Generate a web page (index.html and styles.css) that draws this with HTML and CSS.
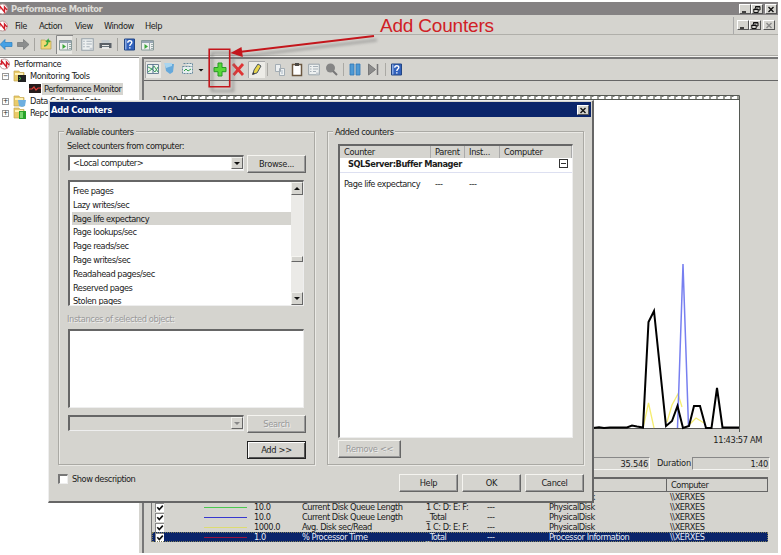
FILE: index.html
```html
<!DOCTYPE html>
<html lang="en">
<head>
<meta charset="utf-8">
<title>Performance Monitor</title>
<link rel="stylesheet" href="styles.css">
</head>
<body>
<svg class="defs" width="0" height="0">
  <defs>
    <symbol id="logo" viewBox="0 0 12 12"><circle cx="5.5" cy="6" r="5" fill="#fff" stroke="#b99"/><path d="M1 6h1.7V3l4.8 6V4l2.5 3" fill="none" stroke="#d01f2b" stroke-width="1.4"/></symbol>
    <symbol id="folder" viewBox="0 0 14 12"><path d="M1 1h5l1 1.5h4V11H1z" fill="#e9cb6a" stroke="#c5a850" stroke-width=".7"/><path d="M2 3h8v2H2z" fill="#fff2b8"/></symbol>
    <symbol id="help" viewBox="0 0 11 12"><path d="M.5.5h10v11H.5z" fill="#3262bd" stroke="#234684"/><path d="M1 1h1.5v10H1z" fill="#88a9e3"/><path d="M3.8 4.2c0-2.6 4-2.6 4-.2 0 1.5-2 1.6-2 3.5M5.8 8.7v1.2" fill="none" stroke="#fff" stroke-width="1.4"/></symbol>
    <symbol id="window" viewBox="0 0 13 12"><path d="M.5 1.500h12v9.500H.5z" fill="#eef0ef" stroke="#899"/><path d="M1 2h11v2H1z" fill="#98a5b3"/><path d="M8.500 4v7M10 5.500h2M10 7.500h2M10 9.500h2" stroke="#9aa"/><path d="M3.500 5l3.500 2.500-3.500 2.500z" fill="#38a637"/></symbol>
    <symbol id="sheet" viewBox="0 0 12 12"><path d="M.7.7h10.600v10.600H.7z" fill="#edf0f0" stroke="#98a3aa"/><path d="M2 3h1.500M5 3h5M2 5.500h1.500M5 5.500h5M2 8h1.500M5 8h3" stroke="#a6b0b8"/><path d="M8 9h3v2H8z" fill="#c4cbd0"/></symbol>
    <symbol id="min" viewBox="0 0 10 9"><path d="M2 7h4" stroke="#111" stroke-width="1.500"/></symbol>
    <symbol id="restore" viewBox="0 0 10 9"><path d="M3.500 3.500V1.500h4.500v3.500H6.500M1.800 4h4.400v3.500H1.800zM3.500 2h4.500M1.800 4.500h4.400" fill="none" stroke="#111"/></symbol>
    <symbol id="close" viewBox="0 0 10 9"><path d="M2.500 2l5 5M7.500 2l-5 5" stroke="currentColor" stroke-width="1.400"/></symbol>
    <symbol id="tick" viewBox="0 0 8 8"><path d="M1.300 3.300l2 2.300 3.500-4" fill="none" stroke="#111" stroke-width="1.600"/></symbol>
  </defs>
</svg>
<div class="window">
  <header class="titlebar"><svg class="logo"><use href="#logo"/></svg><b>Performance Monitor</b>
    <span class="winbtns"><i><svg><use href="#min"/></svg></i><i><svg><use href="#restore"/></svg></i><i class="last"><svg><use href="#close"/></svg></i></span>
  </header>
  <nav class="menubar"><svg class="logo"><use href="#logo"/></svg><span class="m1">File</span><span class="m2">Action</span><span class="m3">View</span><span class="m4">Window</span><span>Help</span>
    <span class="winbtns child"><i><svg><use href="#min"/></svg></i><i><svg><use href="#restore"/></svg></i><i class="last off"><svg><use href="#close"/></svg></i></span>
  </nav>
  <div class="maintools">
    <svg width="778" height="20" viewBox="0 0 778 20">
      <path d="M0 9.500l5-5v3h7v4H5v3z" fill="#45a1e5" stroke="#287dbd" stroke-width=".7"/>
      <path d="M29 9.500l-5.500-5v3h-6v4h6v3z" fill="#8b8d8d" stroke="#737676" stroke-width=".7"/>
      <path d="M34.500 3v13M76.500 3v13M117.500 3v13" stroke="#a5a49f"/>
      <path d="M41 5h4l1 1h5v8H41z" fill="#f1d775" stroke="#b79d52" stroke-width=".7"/><path d="M44 11c3 0 4-2 4-6l-2 2m2-2l2 2" fill="none" stroke="#3aa83b" stroke-width="1.500"/>
      <path d="M56.500 19V.5H73" fill="none" stroke="#888"/><path d="M57 1h15v18H57z" fill="#e9e8e4"/>
      <use href="#window" x="59" y="4" width="13" height="12"/>
      <use href="#sheet" x="81" y="3" width="13" height="13"/>
      <path d="M101.500 5h8v4h-8z" fill="#c4cbd0"/><path d="M99.500 8h12v5h-12z" fill="#596067"/><path d="M102 10h7v4h-7z" fill="#e8e9e9"/><path d="M102 11.500h7" stroke="#68747d"/>
      <use href="#help" x="124" y="3" width="11" height="13"/><use href="#window" x="141" y="4" width="13" height="12"/>
    </svg>
  </div>
  <main class="content">
    <aside class="tree">
      <div class="node root"><svg class="logo"><use href="#logo"/></svg><span>Performance</span></div>
      <div class="node"><i class="exp">−</i><svg class="nicon" viewBox="0 0 14 12"><use href="#folder" width="14" height="12"/><path d="M5 5h8v7H5z" fill="#222"/><path d="M6 7l2 1.500L6 10" fill="none" stroke="#4b4"/></svg><span>Monitoring Tools</span></div>
      <div class="node leaf"><svg class="picon" viewBox="0 0 12 9"><path d="M0 0h12v9H0z" fill="#251b1b"/><path d="M0 5h3l2-2 2 3 2-2h3" fill="none" stroke="#e13d36" stroke-width="1.200"/></svg><span class="chosen">Performance Monitor</span></div>
      <div class="node"><i class="exp">+</i><svg class="nicon" viewBox="0 0 14 12"><use href="#folder" width="14" height="12"/><path d="M5 5h8l-1 6-3 1-3-1z" fill="#6eafe0"/></svg><span>Data Collector Sets</span></div>
      <div class="node"><i class="exp">+</i><svg class="nicon" viewBox="0 0 14 12"><use href="#folder" width="14" height="12"/><path d="M6 4h7v8H6z" fill="#28a22c"/><path d="M7 5h3v6H7z" fill="#77d66d"/></svg><span>Repc</span></div>
    </aside>
    <section class="monitor">
      <div class="montools">
        <svg width="630" height="22" viewBox="144 57 630 22">
          <path d="M145 59h16v17h-16z" fill="#e9e9e5"/><path d="M145.500 76V59.500H161" fill="none" stroke="#aaa"/>
          <path d="M147.500 62.500h11v9h-11z" fill="#edf5ef" stroke="#6c8396"/><path d="M148 65l4 2 2-3 4 6M148 70l4-3 3 3 3-5" fill="none" stroke="#40a05f"/><path d="M153 62v9" stroke="#516e93"/>
          <path d="M165 62h9l-1 8-3 2-4-3z" fill="#66a9db"/><path d="M164 61h8v3l-6 2z" fill="#a9d5ef"/>
          <path d="M183.500 61.500h9v3M182.500 64.500h10v7h-10z" fill="#e5eeee" stroke="#68899d" stroke-dasharray="2 1"/><path d="M184 69l2-2 2 2 3-2" fill="none" stroke="#35a247"/><path d="M198.500 67h5l-2.500 2.500z" fill="#111"/>
          <path d="M218 61h4v4.500h4v4.200h-4V74h-4v-4.300h-4v-4.200h4z" fill="#58d739" stroke="#249a24"/>
          <path d="M233 62l10 11M243 62l-9.500 11" stroke="#df3434" stroke-width="2.800"/>
          <path d="M248 59h17v17h-17z" fill="#edece7"/><path d="M248.500 76V59.500H265" fill="none" stroke="#aaa"/><path d="M253 72l1-4 4-6 3 2-4 7z" fill="#e9d648" stroke="#4b5561"/><path d="M252 73l1-3 2 2z" fill="#333"/>
          <path d="M267.500 61v13M343.500 61v13M385.500 61v13" stroke="#aaa9a4"/>
          <path d="M275.500 62.500h5v7h-5zM279.500 66.500h5v7h-5z" fill="#edf0f1" stroke="#a3adb4"/><path d="M281 69h2M281 71h2" stroke="#aab8c6"/>
          <path d="M292.500 62.500h9v11h-9z" fill="#fff" stroke="#6b5740" stroke-width="1.500"/><path d="M295 61h4v3h-4z" fill="#4d4a46"/>
          <use href="#sheet" x="308" y="61" width="12" height="13"/>
          <circle cx="330.500" cy="66" r="4.500" fill="#858585"/><path d="M333 69l4 4" stroke="#777" stroke-width="2"/>
          <path d="M350 62h4v11h-4zM356 62h4v11h-4z" fill="#4e9ad5" stroke="#3076b5" stroke-width=".8"/>
          <path d="M368.500 62l7 5.500-7 5.500z" fill="#8c8c8c" stroke="#777"/><path d="M377.500 62v11" stroke="#777" stroke-width="1.500"/>
          <use href="#help" x="391" y="61" width="11" height="13"/>
        </svg>
      </div>
      <div class="graph">
        <svg width="630" height="368" viewBox="144 80 630 368">
          <path d="M181 95h559v333H181z" fill="#fff"/>
          <path d="M184 97.500h555" stroke="#999a93" stroke-width="3" stroke-dasharray="2 5"/><path d="M185.500 96.500h553" stroke="#777" stroke-dasharray="2 5"/>
          <path d="M181 95.500h558.500V432M181 99.500h558.500" fill="none" stroke="#555953"/><path d="M181.500 95v333.500h558" fill="none" stroke="#555"/><path d="M177 99.500h4" stroke="#333"/>
          <text class="axis" x="162" y="102.500">100</text>
          <path d="M643 428L648.500 403L654 428M667 422L672 405L678 394L682 407M690 424L696 418L704 423" fill="none" stroke="#f5ed70" stroke-width="1.300"/>
          <path d="M677.500 428L683 264L688.500 427" fill="none" stroke="#777ff0" stroke-width="1.500"/>
          <path d="M593 428l6-.7 5 .8 6-.6h17l5-2 5 1L643 427.500L648.500 322L654 311L666 426L672 421L677.500 406L683 428L689 426L694 406H700L706 428H711.500L717 388L722.500 427.500H739" fill="none" stroke="#000" stroke-width="2"/>
        </svg>
        <span class="time">11:43:57 AM</span>
      </div>
      <div class="stats"><span class="field avg">35.546</span><span class="durlabel">Duration</span><span class="field dur">1:40</span></div>
      <div class="legend">
        <div class="lr lhead"><span></span><span></span><span></span><span></span><span></span><span></span><span></span><span>Computer</span></div>
        <div class="lr"><i class="check"><svg><use href="#tick"/></svg></i><i class="line green"></i><span></span><span></span><span></span><span></span><span>PhysicalDisk</span><span class="host">\\XERXES</span></div>
        <div class="lr"><i class="check"><svg><use href="#tick"/></svg></i><i class="line green"></i><span>10.0</span><span>Current Disk Queue Length</span><span>1 C: D: E: F:</span><span>---</span><span>PhysicalDisk</span><span class="host">\\XERXES</span></div>
        <div class="lr"><i class="check"><svg><use href="#tick"/></svg></i><i class="line blue"></i><span>10.0</span><span>Current Disk Queue Length</span><span>_Total</span><span>---</span><span>PhysicalDisk</span><span class="host">\\XERXES</span></div>
        <div class="lr"><i class="check"><svg><use href="#tick"/></svg></i><i class="line yellow"></i><span>1000.0</span><span>Avg. Disk sec/Read</span><span>1 C: D: E: F:</span><span>---</span><span>PhysicalDisk</span><span class="host">\\XERXES</span></div>
        <div class="lr active"><i class="check"><svg><use href="#tick"/></svg></i><i class="line red"></i><span>1.0</span><span>% Processor Time</span><span>_Total</span><span>---</span><span>Processor Information</span><span class="host">\\XERXES</span></div>
      </div>
    </section>
  </main>
</div>

<div class="dialog">
  <div class="dtitle"><b>Add Counters</b><i class="dclose"><svg><use href="#close"/></svg></i></div>
  <div class="groups">
    <section class="group">
      <h2>Available counters</h2>
      <div class="label">Select counters from computer:</div>
      <div class="row"><div class="combo"><span>&lt;Local computer&gt;</span><i class="drop down"></i></div><button>Browse...</button></div>
      <div class="list">
        <ul><li class="sliver"></li><li>Free pages</li><li>Lazy writes/sec</li><li class="sel">Page life expectancy</li><li>Page lookups/sec</li><li>Page reads/sec</li><li>Page writes/sec</li><li>Readahead pages/sec</li><li>Reserved pages</li><li>Stolen pages</li></ul>
        <div class="scroll"><i class="drop up"></i><i class="thumb"></i><i class="drop down"></i></div>
      </div>
      <div class="label dim inst">Instances of selected object:</div>
      <div class="instances"></div>
      <div class="row search"><div class="combo off"><span></span><i class="drop down"></i></div><button disabled>Search</button></div>
      <button class="add">Add &gt;&gt;</button>
    </section>
    <section class="group">
      <h2>Added counters</h2>
      <div class="added">
        <div class="ar ahead"><span>Counter</span><span>Parent</span><span>Inst...</span><span>Computer</span></div>
        <div class="agroup"><b>SQLServer:Buffer Manager</b><i class="collapse"></i></div>
        <div class="ar arow"><span>Page life expectancy</span><span>---</span><span>---</span><span></span></div>
      </div>
      <button class="remove" disabled>Remove &lt;&lt;</button>
    </section>
  </div>
  <div class="dfoot"><i class="box"></i><span>Show description</span><button>Help</button><button>OK</button><button>Cancel</button></div>
</div>

<svg class="note" width="781" height="100" viewBox="0 0 781 100">
  <defs><filter id="soft" x="-10%" y="-30%" width="120%" height="170%"><feGaussianBlur stdDeviation="1.500"/></filter></defs>
  <g fill="none" stroke="#777" stroke-width="2.500" opacity=".55" filter="url(#soft)"><path d="M212 53h21v38h-21zM377 40L236 57"/></g>
  <path d="M209.200 49.200h20.500v37.500h-20.500z" fill="none" stroke="#c4161c" stroke-width="1.600"/>
  <path d="M374 36L239 52" stroke="#c4161c" stroke-width="2"/><path d="M230.500 53l11-6 1.300 10z" fill="#c4161c"/>
  <text class="notetext" x="380" y="32" textLength="114">Add Counters</text>
</svg>
</body>
</html>
```
FILE: styles.css
```css
* { box-sizing: border-box; }
body { margin: 0; width: 781px; height: 555px; overflow: hidden; position: relative; background: #fff; color: #1b1b1b; font: 9.2px/12px "DejaVu Sans Condensed", "DejaVu Sans", sans-serif; font-stretch: condensed; white-space: nowrap; letter-spacing: -.47px; }
i { font-style: normal; }
svg { display: block; flex: none; }
.defs { position: absolute; }
.window { margin-top: 2px; width: 778px; height: 551px; background: #d5d4cf; display: flex; flex-direction: column; }
.titlebar { height: 13px; flex: none; background: #858283; color: #dddcd7; display: flex; align-items: center; font-size: 9.3px; }
.logo { width: 12px; height: 12px; margin-left: -3px; flex: none; }
.titlebar b { margin-left: 2px; }
.winbtns { display: flex; margin-left: auto; padding-right: 1px; }
.winbtns i, .dclose { display: block; width: 12px; height: 10px; background: #d5d4cf; border: 1px solid; border-color: #fff #555 #555 #fff; color: #111; }
.winbtns .last { margin-left: 2px; }
.winbtns svg, .dclose svg { width: 10px; height: 9px; }
.winbtns .off { color: #888; }
.menubar { height: 18px; margin-top: 2px; flex: none; display: flex; align-items: center; border-bottom: 1px solid #b0afaa; }
.m1 { margin-left: 6px; width: 24px; }
.m2 { width: 36px; } .m3 { width: 29px; } .m4 { width: 41px; }
.child { height: 17px; padding: 3px 3px 0 3px; border-left: 1px solid #aaa; }
.maintools { height: 21px; flex: none; border-bottom: 1px solid #aaa9a4; }
.content { display: flex; flex: 1; min-height: 0; border-top: 1px solid #f3f2ef; }
.tree { width: 139px; background: #fff; border-top: 1px solid #888; }
.node { height: 12.300px; display: flex; align-items: center; padding-left: 2px; }
.node > span { padding: 0 2px; }
.root { padding-left: 2px; }
.root span { margin-left: 1px; }
.exp { width: 7px; height: 7px; border: 1px solid #999; font-size: 7px; line-height: 5px; text-align: center; }
.nicon { width: 14px; height: 12px; margin: 0 1px 0 4px; }
.leaf { padding-left: 29px; }
.picon { width: 12px; height: 9px; margin-right: 1px; }
.chosen { background: #d5d4cf; height: 12px; }
.monitor { margin-left: 3px; flex: 1; border-left: 2px solid #777; border-top: 2px solid #777; display: flex; flex-direction: column; }
.montools { height: 22px; flex: none; border-bottom: 1px solid #666; overflow: hidden; }
.graph { height: 375px; flex: none; position: relative; }
.graph svg { height: 368px; margin-top: -1px; }
.axis { font-size: 9.500px; fill: #222; letter-spacing: 0; }
.time { position: absolute; right: 16px; top: 353px; letter-spacing: -.35px; }
.stats { height: 12px; flex: none; margin-top: 1px; display: flex; justify-content: flex-end; padding-right: 8px; letter-spacing: -.25px; }
.field { border: 1px solid; border-color: #888 #f5f5f2 #f5f5f2 #888; text-align: right; height: 13px; line-height: 11px; padding-right: 1px; }
.avg { width: 100px; } .durlabel { margin: 0 3px 0 7px; width: 32px; } .dur { width: 78px; }
.legend { margin: 8px 10px 0 7px; border-top: 2px solid #666; border-left: 1px solid #777; height: 65px; }
.lr { display: grid; grid-template-columns: 45px 57px 48px 124px 61px 62px 117px 1fr; height: 10px; line-height: 10px; align-items: center; }
.lhead { height: 13px; border-bottom: 1px solid #666; }
.lhead span { height: 12px; line-height: 12px; }
.lhead span:last-child { border-left: 1px solid #666; border-right: 1px solid #666; padding-left: 4px; }
.host { padding-left: 4px; }
.check { margin-left: 3px; width: 9px; height: 9px; background: #fff; border: 1px solid #888; border-right: 0; border-bottom: 0; }
.check svg { width: 8px; height: 8px; }
.line { width: 43px; margin-left: 7px; border-top: 1px solid; }
.green { color: #4bc84f; } .blue { color: #3737cf; } .yellow { color: #dddc70; } .red { color: #9b1640; }
.active { background: #0a246a; color: #e8edf7; outline: 1px dotted #81805b; outline-offset: -1px; }

.dialog { position: absolute; left: 48px; top: 100px; width: 546px; height: 403px; background: #d5d4cf; border: 1px solid; border-color: #eee #666 #666 #eee; border-right-width: 2px; border-bottom-width: 2px; padding: 1px; }
.dtitle { height: 15px; background: #0a246a; color: #fff; display: flex; align-items: center; padding: 0 2px 0 1px; }
.dtitle b { font-size: 9.400px; letter-spacing: -.3px; }
.dclose { margin-left: auto; }
.groups { display: flex; gap: 12px; padding: 14px 0 0 8px; }
.group { width: 257px; height: 334px; border: 1px solid #aaa9a4; box-shadow: inset 1px 1px #eae9e5, 1px 1px #eae9e5; padding: 0 8px 0 9px; display: flex; flex-direction: column; }
h2 { margin: -6px 0 0 -4px; padding: 0 2px; font: inherit; align-self: flex-start; background: #d5d4cf; }
.label { margin: 2px 0 3px -1px; height: 12px; }
.row { display: flex; justify-content: space-between; }
.combo { width: 176px; height: 16px; background: #fff; border: 1px solid; border-width: 2px 1px 1px 2px; border-color: #666 #eee #eee #666; display: flex; justify-content: space-between; line-height: 12px; padding-left: 3px; }
.combo.off { background: #d5d4cf; }
.drop { width: 12px; height: 12px; flex: none; background: #d5d4cf; border: 1px solid; border-color: #f2f2ee #666 #666 #f2f2ee; display: flex; justify-content: center; align-items: center; }
.drop::after { content: ""; border: 3px solid transparent; }
.drop.down::after { border-top-color: #111; border-bottom: 0; }
.drop.up::after { border-bottom-color: #111; border-top: 0; }
.off .drop.down::after { border-top-color: #888; }
button { font: inherit; letter-spacing: -.3px; color: #1b1b1b; background: #d5d4cf; width: 59px; height: 18px; padding: 0; border: 1px solid; border-color: #f5f4f0 #666 #666 #f5f4f0; box-shadow: inset -1px -1px #999; }
button:disabled { color: #999; text-shadow: 1px 1px #eee; }
.list { height: 126px; flex: none; margin: 7px 2px 0 0; background: #fff; border: 2px solid #666; border-right: 1px solid #eee; border-bottom: 1px solid #eee; display: flex; overflow: hidden; }
ul { list-style: none; margin: 0 0 0 2px; padding: 0; flex: 1; }
li { height: 13.800px; line-height: 13.800px; padding-left: 1px; }
.sliver { height: 2px; }
.sel { background: #d5d4cf; }
.scroll { width: 12px; background: #ebeae7; display: flex; flex-direction: column; }
.scroll .drop { height: 13px; }
.thumb { margin-top: 61px; margin-bottom: auto; height: 6px; background: #d5d4cf; border: 1px solid; border-color: #f5f4f0 #666 #666 #f5f4f0; }
.dim { color: #999; text-shadow: 1px 1px #eee; letter-spacing: -.38px; }
.inst { margin: 7px 0 4px -1px; }
.instances { height: 79px; flex: none; margin-right: 2px; background: #fff; border: 1px solid #eee; border-top: 2px solid #666; border-left: 2px solid #666; }
.search { margin-top: 7px; }
.add { margin: 8px 0 0 auto; flex: none; border: 1px solid #222; box-shadow: inset 1px 1px #fff, inset -1px -1px #555; }
.added { margin: 6px 2px 0 1px; height: 294px; flex: none; background: #fff; border: 1px solid #eee; border-top: 2px solid #666; border-left: 2px solid #666; }
.ar { display: grid; grid-template-columns: 91px 34px 35px 1fr; }
.ar span { padding-left: 4px; }
.ahead { background: #d5d4cf; height: 12px; line-height: 12px; letter-spacing: -.3px; }
.ahead span { border-right: 1px solid #aaa; }
.agroup { height: 15px; border-bottom: 1px solid #dde0f1; display: flex; align-items: center; padding: 0 4px 3px 8px; }
.agroup b { font-size: 9.200px; }
.collapse { width: 9px; height: 9px; border: 1px solid #333; margin-left: auto; display: flex; align-items: center; }
.collapse::after { content: ""; width: 5px; margin-left: 1px; border-top: 1px solid #333; }
.arow { margin-top: 5px; }
.remove { width: 63px; margin: 2px 0 0 1px; }
.dfoot { display: flex; align-items: center; height: 18px; margin-top: 9px; padding: 0 7px 0 8px; gap: 4px; }
.dfoot span { margin-right: auto; margin-top: -9px; }
.box { width: 10px; height: 10px; background: #fff; border: 1px solid #eee; border-top: 2px solid #777; border-left: 2px solid #777; margin-top: -9px; }
.note { position: absolute; left: 0; top: 0; }
.notetext { font: 19px "Liberation Sans", sans-serif; fill: #d02025; letter-spacing: 0; }
```
